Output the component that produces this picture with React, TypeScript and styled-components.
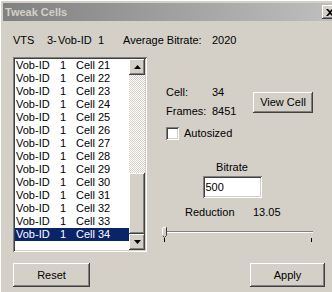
import React from "react";
import styled, { createGlobalStyle, css } from "styled-components";

const GlobalStyle = createGlobalStyle`
  html, body {
    margin: 0;
    padding: 0;
    overflow: hidden;
    background: #d4d0c8;
  }
  body {
    font-family: "Liberation Sans", Arial, sans-serif;
    font-size: 11px;
    color: #000;
  }
`;

const raised = css`
  box-shadow: inset -1px -1px #404040, inset 1px 1px #ffffff,
    inset -2px -2px #808080, inset 2px 2px #d4d0c8;
`;

const sunken = css`
  box-shadow: inset 1px 1px #808080, inset -1px -1px #ffffff,
    inset 2px 2px #404040, inset -2px -2px #d4d0c8;
`;

const Window = styled.div`
  width: 340px;
  height: 300px;
  background: #d4d0c8;
  box-shadow: inset 1px 1px #ffffff;
  padding: 3px 0 0 3px;
  box-sizing: border-box;
  display: flex;
  flex-direction: column;
`;

const TitleBar = styled.div`
  height: 18px;
  display: flex;
  align-items: center;
  justify-content: space-between;
  padding: 0 2px 0 2px;
  background: linear-gradient(to right, #808080, #c0c0c0);
  color: #d4d0c8;
  font-weight: bold;
  font-size: 11px;
`;

const CloseButton = styled.div`
  width: 16px;
  height: 14px;
  background: #d4d0c8;
  display: flex;
  align-items: center;
  justify-content: center;
  ${raised};
`;

const Content = styled.div`
  display: flex;
  flex-direction: column;
  padding: 13px 0 0 10px;
`;

const Header = styled.div`
  display: flex;
  height: 13px;
  line-height: 13px;
  white-space: nowrap;
`;

const Col = styled.span<{ $w?: number }>`
  display: inline-block;
  width: ${(p) => (p.$w ? `${p.$w}px` : "auto")};
`;

const Main = styled.div`
  display: flex;
  margin-top: 10px;
`;

const ListBox = styled.div`
  width: 134px;
  height: 195px;
  background: #fff;
  padding: 2px;
  box-sizing: border-box;
  display: flex;
  ${sunken};
`;

const Items = styled.div`
  flex: 1;
`;

const Item = styled.div<{ $selected?: boolean }>`
  display: grid;
  grid-template-columns: 44px 16px 22px auto;
  height: 13px;
  line-height: 13px;
  padding-left: 1px;
  white-space: nowrap;
  background: ${(p) => (p.$selected ? "#0a246a" : "transparent")};
  color: ${(p) => (p.$selected ? "#fff" : "#000")};
`;

const ScrollBar = styled.div`
  width: 16px;
  display: flex;
  flex-direction: column;
`;

const ArrowButton = styled.div`
  width: 16px;
  height: 16px;
  background: #d4d0c8;
  display: flex;
  align-items: center;
  justify-content: center;
  ${raised};
`;

const Track = styled.div`
  flex: 1;
  display: flex;
  flex-direction: column;
  background: conic-gradient(#ffffff 25%, #d4d0c8 0 50%, #ffffff 0 75%, #d4d0c8 0) 0 0 / 2px 2px;
`;

const Thumb = styled.div`
  margin-top: auto;
  height: 61px;
  background: #d4d0c8;
  ${raised};
`;

const RightPanel = styled.div`
  flex: 1;
  display: flex;
  flex-direction: column;
  padding-left: 19px;
`;

const InfoRow = styled.div`
  display: flex;
  align-items: center;
  margin-top: 29px;
`;

const InfoGrid = styled.div`
  display: grid;
  grid-template-columns: 46px 41px;
  row-gap: 6px;
  line-height: 13px;
`;

const Button = styled.div<{ $w: number; $h: number }>`
  width: ${(p) => p.$w}px;
  height: ${(p) => p.$h}px;
  background: #d4d0c8;
  display: flex;
  align-items: center;
  justify-content: center;
  box-sizing: border-box;
  ${raised};
`;

const CheckRow = styled.div`
  display: flex;
  align-items: center;
  gap: 5px;
  margin-top: 9px;
  line-height: 13px;
`;

const CheckBox = styled.div`
  width: 13px;
  height: 13px;
  background: #fff;
  ${sunken};
`;

const BitrateBlock = styled.div`
  display: flex;
  flex-direction: column;
  align-items: center;
  width: 132px;
  margin-top: 21px;
  line-height: 13px;
`;

const Input = styled.div`
  width: 59px;
  height: 22px;
  margin-top: 2px;
  background: #fff;
  box-sizing: border-box;
  padding: 3px 3px;
  line-height: 16px;
  ${sunken};
`;

const ReductionRow = styled.div`
  display: flex;
  margin-top: 8px;
  padding-left: 19px;
  line-height: 13px;
`;

const Slider = styled.div`
  position: relative;
  width: 151px;
  height: 18px;
  margin-top: 6px;
  margin-left: -4px;
`;

const SliderLine = styled.div`
  position: absolute;
  left: 3px;
  right: 0;
  top: 6px;
  height: 1px;
  background: #808080;
  border-bottom: 1px solid #ffffff;
`;

const Tick = styled.div<{ $left: number }>`
  position: absolute;
  left: ${(p) => p.$left}px;
  top: 13px;
  width: 1px;
  height: 4px;
  background: #000;
`;

const Footer = styled.div`
  display: flex;
  justify-content: space-between;
  margin-top: 11px;
  width: 312px;
`;

const cells = [21, 22, 23, 24, 25, 26, 27, 28, 29, 30, 31, 32, 33, 34];

function Arrow({ up }: { up?: boolean }) {
  return (
    <svg width="7" height="4" viewBox="0 0 7 4">
      <path d={up ? "M3.5 0 L7 4 L0 4 Z" : "M0 0 L7 0 L3.5 4 Z"} fill="#000" />
    </svg>
  );
}

export default function App() {
  return (
    <>
      <GlobalStyle />
      <Window>
        <TitleBar>
          <span>Tweak Cells</span>
          <CloseButton>
            <svg width="8" height="7" viewBox="0 0 8 7">
              <path d="M0 0 L2 0 L4 2 L6 0 L8 0 L5 3.5 L8 7 L6 7 L4 5 L2 7 L0 7 L3 3.5 Z" fill="#000" />
            </svg>
          </CloseButton>
        </TitleBar>
        <Content>
          <Header>
            <Col $w={34}>VTS</Col>
            <Col $w={6}>3</Col>
            <Col $w={5}>-</Col>
            <Col $w={40}>Vob-ID</Col>
            <Col $w={25}>1</Col>
            <Col $w={89}>Average Bitrate:</Col>
            <Col>2020</Col>
          </Header>
          <Main>
            <ListBox>
              <Items>
                {cells.map((c) => (
                  <Item key={c} $selected={c === 34}>
                    <span>Vob-ID</span>
                    <span>1</span>
                    <span>Cell</span>
                    <span>{c}</span>
                  </Item>
                ))}
              </Items>
              <ScrollBar>
                <ArrowButton>
                  <Arrow up />
                </ArrowButton>
                <Track>
                  <Thumb />
                </Track>
                <ArrowButton>
                  <Arrow />
                </ArrowButton>
              </ScrollBar>
            </ListBox>
            <RightPanel>
              <InfoRow>
                <InfoGrid>
                  <span>Cell:</span>
                  <span>34</span>
                  <span>Frames:</span>
                  <span>8451</span>
                </InfoGrid>
                <Button $w={60} $h={21}>View Cell</Button>
              </InfoRow>
              <CheckRow>
                <CheckBox />
                <span>Autosized</span>
              </CheckRow>
              <BitrateBlock>
                <span>Bitrate</span>
                <Input>500</Input>
              </BitrateBlock>
              <ReductionRow>
                <Col $w={68}>Reduction</Col>
                <Col>13.05</Col>
              </ReductionRow>
              <Slider>
                <SliderLine />
                <svg
                  width="5"
                  height="11"
                  viewBox="0 0 5 11"
                  style={{ position: "absolute", left: 0, top: 2 }}
                >
                  <path d="M0.5 0.5 H4.5 V8.5 L2.5 10.5 L0.5 8.5 Z" fill="#d4d0c8" stroke="#404040" />
                  <path d="M0.5 8.5 V0.5 H4" fill="none" stroke="#fff" />
                </svg>
                <Tick $left={2} />
                <Tick $left={149} />
              </Slider>
            </RightPanel>
          </Main>
          <Footer>
            <Button $w={77} $h={24}>Reset</Button>
            <Button $w={75} $h={24}>Apply</Button>
          </Footer>
        </Content>
      </Window>
    </>
  );
}
